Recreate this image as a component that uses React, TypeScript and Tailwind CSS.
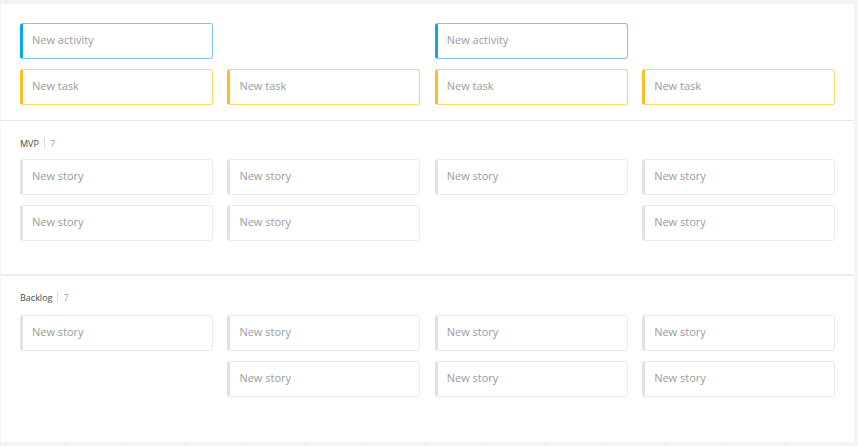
import React from 'react';

type Kind = 'activity' | 'task' | 'story';

interface CardProps {
  kind: Kind;
}

const labels: Record<Kind, string> = {
  activity: 'New activity',
  task: 'New task',
  story: 'New story',
};

const Card: React.FC<CardProps> = ({ kind }) => {
  const tone =
    kind === 'activity'
      ? 'border-[#7cc6ee] border-l-[#0ea5e9]'
      : kind === 'task'
      ? 'border-[#fbd868] border-l-[#fbbf24]'
      : 'border-[#ececec] border-l-[#e2e2e2]';

  return (
    <div
      className={`h-9 flex items-center rounded-[3px] border border-l-[3px] bg-white pl-[9px] pb-[2px] text-[11px] text-[#9b9b9b] ${tone}`}
    >
      {labels[kind]}
    </div>
  );
};

// null marks an empty slot in the 4-column grid
type Slot = Kind | null;

const CardGrid: React.FC<{ slots: Slot[] }> = ({ slots }) => (
  <div className="grid grid-cols-4 gap-x-[14.5px] gap-y-[10px]">
    {slots.map((slot, i) => (slot ? <Card key={i} kind={slot} /> : <div key={i} />))}
  </div>
);

const SectionLabel: React.FC<{ name: string; count: number }> = ({ name, count }) => (
  <div className="flex items-center h-[10px] text-[9px] leading-none">
    <span className="text-[#4a4a4a]">{name}</span>
    <span className="mx-[5px] h-[10px] w-px bg-[#dcdcdc]" />
    <span className="text-[#a0a0a0]">{count}</span>
  </div>
);

export default function App() {
  return (
    <div
      className="w-[858px] h-[446px] bg-[#f4f4f4] bg-[repeating-linear-gradient(90deg,transparent_0_5px,#ebebeb_5px_6px,transparent_6px_60px)] pt-[4px] pl-[1px] overflow-hidden"
      style={{ fontFamily: '"Open Sans", "Noto Sans", sans-serif' }}
    >
      <div className="w-[853px] h-[438px] bg-white flex flex-col">
        <section className="pt-[19px] pb-[15px] pl-[19px] pr-[19px] border-b border-[#e6e6e6]">
          <CardGrid
            slots={['activity', null, 'activity', null, 'task', 'task', 'task', 'task']}
          />
        </section>

        <section className="pt-[17px] pb-[33px] pl-[19px] pr-[19px] border-b-2 border-[#ececec]">
          <SectionLabel name="MVP" count={7} />
          <div className="mt-[11px]">
            <CardGrid
              slots={['story', 'story', 'story', 'story', 'story', 'story', null, 'story']}
            />
          </div>
        </section>

        <section className="pt-[16px] pl-[19px] pr-[19px]">
          <SectionLabel name="Backlog" count={7} />
          <div className="mt-[13px]">
            <CardGrid
              slots={['story', 'story', 'story', 'story', null, 'story', 'story', 'story']}
            />
          </div>
        </section>
      </div>
    </div>
  );
}
